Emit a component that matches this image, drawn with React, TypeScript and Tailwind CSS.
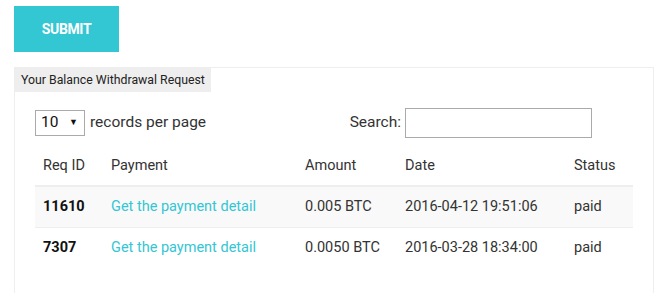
/* Balance withdrawal request list with submit action */
const rows = [
  { id: '11610', amount: '0.005 BTC', date: '2016-04-12 19:51:06', status: 'paid' },
  { id: '7307', amount: '0.0050 BTC', date: '2016-03-28 18:34:00', status: 'paid' },
]

export default function App() {
  return (
    <div className="h-[293px] overflow-hidden bg-white font-['Roboto',sans-serif] text-[14.5px] text-[#333]">
      <div className="pl-[14px] pt-[6px]">
        <button
          type="button"
          className="h-[46px] w-[105px] bg-[#33c6d3] text-[14px] font-bold tracking-tight text-white"
        >
          SUBMIT
        </button>
      </div>

      {/* Panel with tab label */}
      <div className="ml-[14px] mt-[15px] w-[640px] border border-[#eee]">
        <div className="inline-block h-[24px] bg-[#eee] px-[6px] text-[12.3px] leading-[24px] text-[#222]">
          Your Balance Withdrawal Request
        </div>

        <div className="px-[20px] pt-[16px]">
          <div className="flex h-[30px] items-center justify-between pr-[41px] text-[15.5px]">
            <div className="flex items-center gap-[5px]">
              <div className="flex h-[26px] w-[50px] items-center justify-between border border-[#aaa] pl-[5px] pr-[6px] text-[#111]">
                <span>10</span>
                <span className="text-[9px]">▼</span>
              </div>
              <span>records per page</span>
            </div>
            <div className="flex items-center gap-[4px]">
              <span>Search:</span>
              <input type="text" className="h-[30px] w-[187px] border border-[#aaa] outline-none" />
            </div>
          </div>

          {/* Requests table */}
          <table className="mt-[7px] w-[598px] border-collapse text-left leading-[20px]">
            <thead>
              <tr className="border-b-2 border-[#eee]">
                <th className="w-[68px] px-[8px] pt-[11px] pb-[9px] font-normal">Req ID</th>
                <th className="w-[194px] px-[8px] pt-[11px] pb-[9px] font-normal">Payment</th>
                <th className="w-[100px] px-[8px] pt-[11px] pb-[9px] font-normal">Amount</th>
                <th className="w-[169px] px-[8px] pt-[11px] pb-[9px] font-normal">Date</th>
                <th className="px-[8px] pt-[11px] pb-[9px] font-normal">Status</th>
              </tr>
            </thead>
            <tbody>
              {rows.map((row, i) => (
                <tr key={row.id} className={i === 0 ? 'border-b border-[#eee] bg-[#f9f9f9]' : ''}>
                  <td className="px-[8px] py-[10px] font-bold text-[#111]">{row.id}</td>
                  <td className="px-[8px] py-[10px] text-[#33c6d3]">Get the payment detail</td>
                  <td className="px-[8px] py-[10px]">{row.amount}</td>
                  <td className="px-[8px] py-[10px]">{row.date}</td>
                  <td className="px-[8px] py-[10px]">{row.status}</td>
                </tr>
              ))}
            </tbody>
          </table>

          <div className="pt-[22px] pl-[8px] text-[15px]">Showing 1 to 2 of 2 entries</div>
        </div>
      </div>
    </div>
  )
}
